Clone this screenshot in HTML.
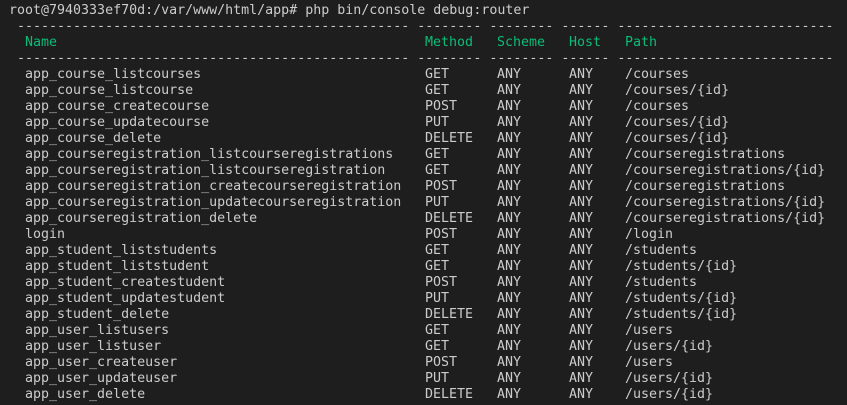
<!DOCTYPE html>
<html><head><meta charset="utf-8"><style>
html,body{margin:0;padding:0;background:#1e1e1e;width:847px;height:405px;overflow:hidden}
body{font-family:"DejaVu Sans Mono","Liberation Mono",monospace;font-size:13.3px;color:#cccccc;position:relative}
#w{position:absolute;left:0;top:1px;width:847px;height:404px}
.r{position:absolute;left:0;height:16px;line-height:16px;white-space:pre;width:847px}
.r span{position:absolute;top:0}
.g{color:#0dbc79}
</style></head><body><div id="w">
<div class="r" style="top:2px"><span style="left:9px">root@7940333ef70d:/var/www/html/app# php bin/console debug:router</span></div>
<div class="r" style="top:18px"><span style="left:9px"> ------------------------------------------------- -------- -------- ------ ---------------------------</span></div>
<div class="r g" style="top:34px"><span style="left:25px">Name</span><span style="left:425px">Method</span><span style="left:497px">Scheme</span><span style="left:569px">Host</span><span style="left:625px">Path</span></div>
<div class="r" style="top:50px"><span style="left:9px"> ------------------------------------------------- -------- -------- ------ ---------------------------</span></div>
<div class="r" style="top:66px"><span style="left:25px">app_course_listcourses</span><span style="left:425px">GET</span><span style="left:497px">ANY</span><span style="left:569px">ANY</span><span style="left:625px">/courses</span></div>
<div class="r" style="top:82px"><span style="left:25px">app_course_listcourse</span><span style="left:425px">GET</span><span style="left:497px">ANY</span><span style="left:569px">ANY</span><span style="left:625px">/courses/{id}</span></div>
<div class="r" style="top:98px"><span style="left:25px">app_course_createcourse</span><span style="left:425px">POST</span><span style="left:497px">ANY</span><span style="left:569px">ANY</span><span style="left:625px">/courses</span></div>
<div class="r" style="top:114px"><span style="left:25px">app_course_updatecourse</span><span style="left:425px">PUT</span><span style="left:497px">ANY</span><span style="left:569px">ANY</span><span style="left:625px">/courses/{id}</span></div>
<div class="r" style="top:130px"><span style="left:25px">app_course_delete</span><span style="left:425px">DELETE</span><span style="left:497px">ANY</span><span style="left:569px">ANY</span><span style="left:625px">/courses/{id}</span></div>
<div class="r" style="top:146px"><span style="left:25px">app_courseregistration_listcourseregistrations</span><span style="left:425px">GET</span><span style="left:497px">ANY</span><span style="left:569px">ANY</span><span style="left:625px">/courseregistrations</span></div>
<div class="r" style="top:162px"><span style="left:25px">app_courseregistration_listcourseregistration</span><span style="left:425px">GET</span><span style="left:497px">ANY</span><span style="left:569px">ANY</span><span style="left:625px">/courseregistrations/{id}</span></div>
<div class="r" style="top:178px"><span style="left:25px">app_courseregistration_createcourseregistration</span><span style="left:425px">POST</span><span style="left:497px">ANY</span><span style="left:569px">ANY</span><span style="left:625px">/courseregistrations</span></div>
<div class="r" style="top:194px"><span style="left:25px">app_courseregistration_updatecourseregistration</span><span style="left:425px">PUT</span><span style="left:497px">ANY</span><span style="left:569px">ANY</span><span style="left:625px">/courseregistrations/{id}</span></div>
<div class="r" style="top:210px"><span style="left:25px">app_courseregistration_delete</span><span style="left:425px">DELETE</span><span style="left:497px">ANY</span><span style="left:569px">ANY</span><span style="left:625px">/courseregistrations/{id}</span></div>
<div class="r" style="top:226px"><span style="left:25px">login</span><span style="left:425px">POST</span><span style="left:497px">ANY</span><span style="left:569px">ANY</span><span style="left:625px">/login</span></div>
<div class="r" style="top:242px"><span style="left:25px">app_student_liststudents</span><span style="left:425px">GET</span><span style="left:497px">ANY</span><span style="left:569px">ANY</span><span style="left:625px">/students</span></div>
<div class="r" style="top:258px"><span style="left:25px">app_student_liststudent</span><span style="left:425px">GET</span><span style="left:497px">ANY</span><span style="left:569px">ANY</span><span style="left:625px">/students/{id}</span></div>
<div class="r" style="top:274px"><span style="left:25px">app_student_createstudent</span><span style="left:425px">POST</span><span style="left:497px">ANY</span><span style="left:569px">ANY</span><span style="left:625px">/students</span></div>
<div class="r" style="top:290px"><span style="left:25px">app_student_updatestudent</span><span style="left:425px">PUT</span><span style="left:497px">ANY</span><span style="left:569px">ANY</span><span style="left:625px">/students/{id}</span></div>
<div class="r" style="top:306px"><span style="left:25px">app_student_delete</span><span style="left:425px">DELETE</span><span style="left:497px">ANY</span><span style="left:569px">ANY</span><span style="left:625px">/students/{id}</span></div>
<div class="r" style="top:322px"><span style="left:25px">app_user_listusers</span><span style="left:425px">GET</span><span style="left:497px">ANY</span><span style="left:569px">ANY</span><span style="left:625px">/users</span></div>
<div class="r" style="top:338px"><span style="left:25px">app_user_listuser</span><span style="left:425px">GET</span><span style="left:497px">ANY</span><span style="left:569px">ANY</span><span style="left:625px">/users/{id}</span></div>
<div class="r" style="top:354px"><span style="left:25px">app_user_createuser</span><span style="left:425px">POST</span><span style="left:497px">ANY</span><span style="left:569px">ANY</span><span style="left:625px">/users</span></div>
<div class="r" style="top:370px"><span style="left:25px">app_user_updateuser</span><span style="left:425px">PUT</span><span style="left:497px">ANY</span><span style="left:569px">ANY</span><span style="left:625px">/users/{id}</span></div>
<div class="r" style="top:386px"><span style="left:25px">app_user_delete</span><span style="left:425px">DELETE</span><span style="left:497px">ANY</span><span style="left:569px">ANY</span><span style="left:625px">/users/{id}</span></div>
<div class="r" style="top:402px"><span style="left:9px"> ------------------------------------------------- -------- -------- ------ ---------------------------</span></div>
</div></body></html>
